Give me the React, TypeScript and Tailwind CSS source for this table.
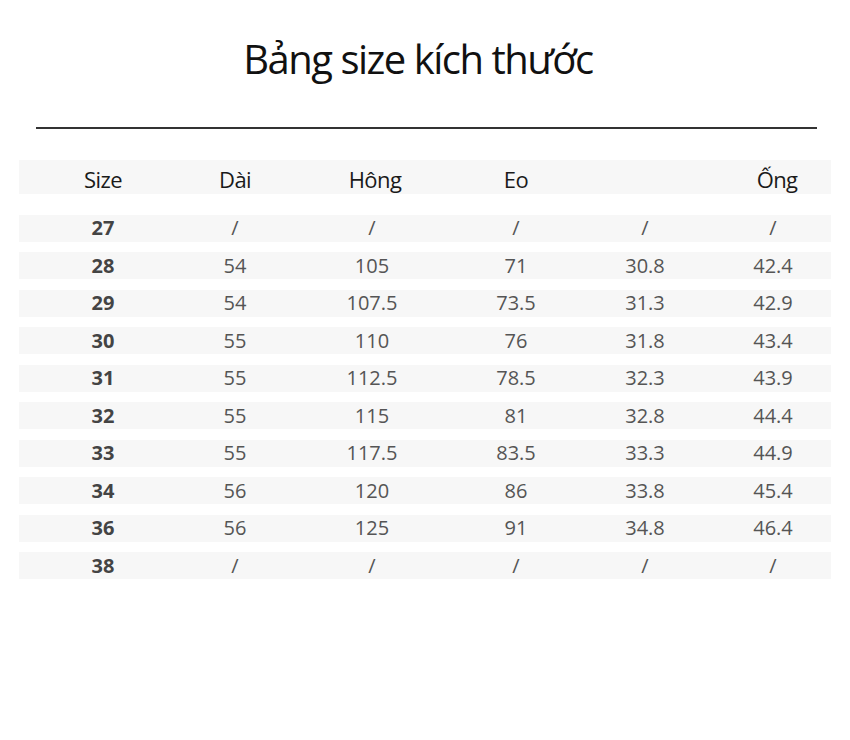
import React from "react";

const rows: string[][] = [
  ["27", "/", "/", "/", "/", "/"],
  ["28", "54", "105", "71", "30.8", "42.4"],
  ["29", "54", "107.5", "73.5", "31.3", "42.9"],
  ["30", "55", "110", "76", "31.8", "43.4"],
  ["31", "55", "112.5", "78.5", "32.3", "43.9"],
  ["32", "55", "115", "81", "32.8", "44.4"],
  ["33", "55", "117.5", "83.5", "33.3", "44.9"],
  ["34", "56", "120", "86", "33.8", "45.4"],
  ["36", "56", "125", "91", "34.8", "46.4"],
  ["38", "/", "/", "/", "/", "/"],
];

const grid = "grid grid-cols-[168px_96px_178px_110px_148px_108px]";

export default function App() {
  return (
    <div className="w-[850px] min-h-[740px] bg-white font-['Open_Sans',sans-serif]">
      <div className="pt-[33px] pr-[14px] flex justify-center">
        <h1 className="text-[40px] leading-[52px] tracking-[-1.5px] text-[#111] font-normal">
          Bảng size kích thước
        </h1>
      </div>
      <div className="mt-[42px] ml-[36px] w-[781px] h-[1.5px] bg-[#333]" />
      <div className="mt-[31px] ml-[19px] w-[812px]">
        <div className={`${grid} h-[34px] pt-[3px] bg-[#f7f7f7] items-center text-[22px] text-[#1a1a1a] tracking-[-0.6px]`}>
          <div className="text-center">Size</div>
          <div className="text-center">Dài</div>
          <div className="text-center pl-[6px]">Hông</div>
          <div className="text-center">Eo</div>
          <div className="text-center"></div>
          <div className="text-center pl-[8px]">Ống</div>
        </div>
        <div className="mt-[21px] flex flex-col gap-[10.5px]">
          {rows.map((r) => (
            <div
              key={r[0]}
              className={`${grid} h-[27px] bg-[#f7f7f7] items-center text-[20px] text-[#555]`}
            >
              {r.map((c, i) => (
                <div
                  key={i}
                  className={`text-center leading-none ${i === 0 ? "font-bold text-[#444]" : ""}`}
                >
                  {c}
                </div>
              ))}
            </div>
          ))}
        </div>
      </div>
    </div>
  );
}
